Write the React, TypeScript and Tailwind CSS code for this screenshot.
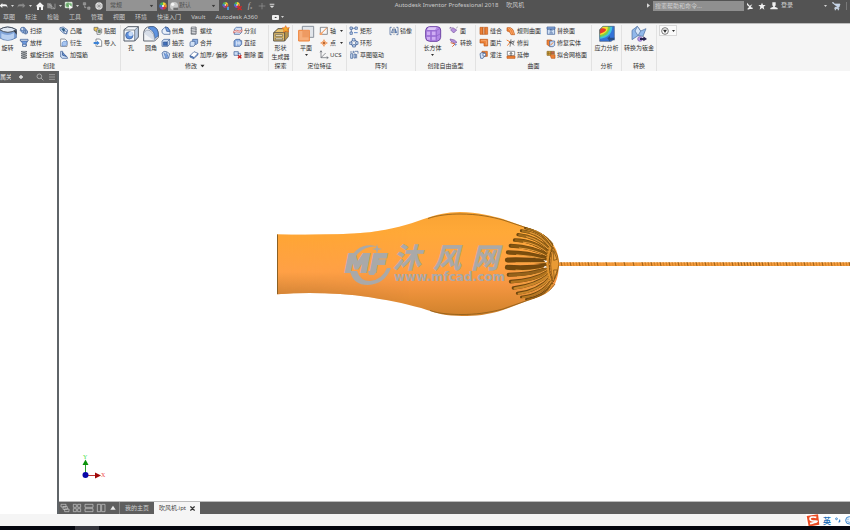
import type { ReactNode } from "react";

const BLUE = "#5b86c8";
const NAVY = "#34568f";
const PALE = "#cfe0f6";
const ORANGE = "#ee8136";
const PEACH = "#f8b98a";
const GRAY = "#5a5f66";

/* Every ribbon glyph is drawn on a 30-unit grid. */
const glyphs: Record<string, ReactNode> = {
  sweep: (
    <g stroke={NAVY} strokeWidth="2">
      <path d="M4 14C4 6 12 2 17 5L22 12 12 22Z" fill="#8fb1e4" />
      <circle cx="10" cy="9" r="5" fill={PALE} />
      <circle cx="20" cy="18" r="6" fill={PALE} />
      <path d="M14 18h12M20 12v12" />
    </g>
  ),
  loft: (
    <g stroke={NAVY} strokeWidth="2">
      <path d="M4 6h23l-5 10v8H11v-8Z" fill="#6f9be0" />
      <path d="M4 4h23v5H4ZM11 19h10v6H11Z" fill="#f5faff" />
    </g>
  ),
  coil: (
    <g stroke="#3d4248" strokeWidth="3" fill="none">
      <path d="M6 5q9 4 18 0M6 11q9 4 18 0M6 17q9 4 18 0M6 23q9 4 18 0" />
      <path d="M8 4h14M8 10h14M8 16h14M8 22h14" stroke="#777d84" strokeWidth="2" />
    </g>
  ),
  emboss: (
    <g strokeWidth="2">
      <path d="M3 5l10-2 13 9-3 12-10-3L3 12Z" fill={PALE} stroke={NAVY} />
      <path d="M6 8l8-2 5 6-5 5Z" fill="#2b5d86" />
      <path d="M15 14l8 3-2 7-6-4Z" fill="#fff" stroke={NAVY} />
    </g>
  ),
  derive: (
    <g stroke={GRAY} strokeWidth="2">
      <path d="M5 3h13l6 6v16H5Z" fill="#fff" />
      <path d="M9 14l5-4h10v9l-5 5H9Z" fill="#a9c7f0" stroke={BLUE} />
    </g>
  ),
  rib: (
    <g stroke={NAVY} strokeWidth="2">
      <path d="M5 4h6v11l12 4 3 6H10l-5-4Z" fill={PALE} />
      <path d="M11 7l11 12-11-3Z" fill="#6f9be0" />
    </g>
  ),
  decal: (
    <g stroke={GRAY} strokeWidth="2">
      <path d="M3 4h12v9l-4 4-8-4Z" fill="#f5c94e" />
      <path d="M12 9h14v12l-5 4h-9Z" fill="#fff" />
      <path d="M16 12h6v8h-6Z" fill="#7ab05a" />
    </g>
  ),
  import: (
    <g stroke={GRAY} strokeWidth="2">
      <path d="M9 3h11l6 6v16H9Z" fill="#fff" />
      <path d="M2 12h10V8l8 7-8 7v-4H2Z" fill="#3b82d6" stroke="none" />
    </g>
  ),
  chamfer: (
    <g stroke={NAVY} strokeWidth="2">
      <path d="M3 12L13 3l8 2 6 9v11H9l-6-5Z" fill="#e8f0fb" />
      <path d="M13 3l8 2 6 12-10-1Z" fill="#6f9be0" />
    </g>
  ),
  shell: (
    <g stroke={NAVY} strokeWidth="2">
      <path d="M3 9l6-5h17v15l-6 6H3Z" fill={PALE} />
      <path d="M7 12h11v10H7Z" fill="#3f6fbc" />
      <path d="M20 10v15M20 10l6-6" fill="none" />
    </g>
  ),
  draft: (
    <g stroke={NAVY} strokeWidth="2">
      <path d="M3 9l6-5 8 1 9 6-3 14H7Z" fill={PALE} />
      <path d="M9 8l6 17M16 7l6 17" />
      <path d="M10 10l7 2 3 12h-6Z" fill="#6f9be0" stroke="none" />
    </g>
  ),
  thread: (
    <g stroke={GRAY} strokeWidth="2" fill="none">
      <path d="M7 3h14v22H7Z" fill="#eef0f3" />
      <path d="M5 8l18-2M5 13l18-2M5 18l18-2M5 23l18-2" />
    </g>
  ),
  combine: (
    <g stroke={NAVY} strokeWidth="2">
      <path d="M11 4h15v12l-4 3H11Z" fill="#8fb1e4" />
      <path d="M3 13l4-3h11v11l-4 4H3Z" fill={PALE} />
    </g>
  ),
  thicken: (
    <g stroke={NAVY} strokeWidth="2">
      <path d="M3 17L15 5l12 5-12 13Z" fill="#fff" />
      <path d="M3 17v4l11 5v-4ZM14 26l13-12v-4" fill="#6f9be0" />
    </g>
  ),
  split: (
    <g strokeWidth="2">
      <path d="M4 9l6-5h16v15l-6 6H4Z" fill={PALE} stroke={NAVY} />
      <path d="M2 16q8-6 13-2t12-3v5q-7 5-12 2t-13 3Z" fill="#fff" stroke="#d6534a" />
    </g>
  ),
  direct: (
    <g stroke={NAVY} strokeWidth="2">
      <path d="M3 9l6-5h12v4h5v11l-6 6H3Z" fill="#8fb1e4" />
      <path d="M11 9v14M18 8v14M11 15h13" stroke="#fff" />
    </g>
  ),
  deleteFace: (
    <g strokeWidth="2">
      <path d="M3 5h13v11H3Z" fill={PALE} stroke={NAVY} />
      <path d="M14 10h8v6" fill="none" stroke={NAVY} />
      <path d="M15 16l10 9M25 16l-10 9" stroke="#c7221f" strokeWidth="4" />
    </g>
  ),
  axis: (
    <g strokeWidth="2">
      <path d="M4 4h21v21H4Z" fill="#f7f7f7" stroke={GRAY} />
      <path d="M5 24L24 5" stroke={ORANGE} strokeWidth="3" />
      <path d="M2 20h8v7H2Z" fill="#f5a36b" />
    </g>
  ),
  point: (
    <g stroke={ORANGE} strokeWidth="2">
      <path d="M15 4v22M4 15h22" />
      <path d="M15 7l8 8-8 8-8-8Z" fill={PEACH} />
      <circle cx="15" cy="15" r="2" fill="#a24a12" stroke="#a24a12" />
    </g>
  ),
  ucs: (
    <g stroke={GRAY} strokeWidth="2" fill="none">
      <path d="M6 3v20h21M6 23L20 9" />
      <path d="M3 7l3-5 3 5M23 20l5 3-5 3" />
    </g>
  ),
  rectPattern: (
    <g stroke={NAVY} strokeWidth="2" fill={PALE}>
      <path d="M7 7h16M7 7v15" fill="none" />
      <path d="M3 3h7v7H3ZM18 3h7v7h-7ZM3 18h7v7H3Z" />
      <path d="M15 20h11" stroke={BLUE} strokeWidth="3" />
    </g>
  ),
  circPattern: (
    <g stroke={NAVY} strokeWidth="2" fill={PALE}>
      <circle cx="15" cy="15" r="9" fill="none" />
      <path d="M10 2h8v7h-8ZM2 12h7v7H2ZM20 11h7v8h-7ZM11 20h8v7h-8Z" />
    </g>
  ),
  sketchPattern: (
    <g stroke={NAVY} strokeWidth="2" fill={PALE}>
      <path d="M5 11h6v14H5ZM15 12h5v12h-5Z" />
      <path d="M3 6h7M18 4h9v7M23 12v13" fill="none" />
      <circle cx="14" cy="6" r="2" />
    </g>
  ),
  mirror: (
    <g stroke={NAVY} strokeWidth="2">
      <path d="M8 4H3v22h5M22 4h5v22h-5" fill="none" />
      <path d="M7 20L12 8v12Z" fill="#fff" />
      <path d="M23 20L18 8v12Z" fill="#8fb1e4" />
      <path d="M15 3v24" stroke={GRAY} strokeDasharray="3 2" />
    </g>
  ),
  face: (
    <g strokeWidth="2">
      <path d="M11 5l12 7-9 9-9-9Z" fill="#b792dd" stroke="#75539b" />
      <path d="M3 4l5 1M4 3l-1 6" stroke="#75539b" />
      <path d="M22 6l4-3" stroke={GRAY} />
    </g>
  ),
  convert: (
    <g strokeWidth="2">
      <path d="M3 3l13 3 8 7-6 3L6 10Z" fill="#b792dd" stroke="#75539b" />
      <path d="M5 14l13 4-8 8" fill="none" stroke="#d5673c" strokeWidth="3" />
      <path d="M17 17l8 2-7 5Z" fill="#6f9be0" />
    </g>
  ),
  stitch: (
    <g stroke="#bd5a1b" strokeWidth="2">
      <path d="M3 4h9v21H3ZM17 4h9v21h-9Z" fill={ORANGE} />
      <path d="M12 4h5v21h-5Z" fill="#fff" />
      <path d="M10 9h9M10 15h9M10 21h9" />
    </g>
  ),
  patch: (
    <g stroke="#bd5a1b" strokeWidth="2">
      <path d="M3 4h23v20H15v-9H3Z" fill={ORANGE} />
      <path d="M6 8h16v12" fill="none" stroke={PEACH} />
    </g>
  ),
  sculpt: (
    <g strokeWidth="2">
      <path d="M9 4h16v15H9Z" fill={ORANGE} stroke="#bd5a1b" />
      <path d="M3 11l5-3h9v10l-5 7H5Z" fill={PALE} stroke={NAVY} />
      <path d="M12 10h8v8h-8Z" fill="#fff" stroke={NAVY} />
    </g>
  ),
  ruled: (
    <g stroke="#bd5a1b" strokeWidth="2">
      <path d="M3 5q12-3 18 6l5 15H15Q14 16 3 15Z" fill={ORANGE} />
      <path d="M6 5q9 8 11 20M12 5q9 8 11 20" fill="none" stroke={PEACH} />
    </g>
  ),
  trim: (
    <g strokeWidth="2">
      <path d="M2 6l11 6-9 11" fill="none" stroke={ORANGE} strokeWidth="3" />
      <path d="M15 4l-3 22M9 14l17-5M12 12l13 10" stroke="#3d4248" />
      <circle cx="20" cy="14" r="3" fill="#fff" stroke="#3d4248" />
    </g>
  ),
  extend: (
    <g strokeWidth="2">
      <path d="M4 4h22v12H4Z" fill="#fff" stroke={GRAY} />
      <path d="M3 18h24v7H3Z" fill={ORANGE} stroke="#bd5a1b" />
      <path d="M15 18V8M11 12l4-5 4 5" fill="none" stroke="#333" />
    </g>
  ),
  replace: (
    <g stroke={NAVY} strokeWidth="2">
      <path d="M4 9h22v16H4Z" fill={PALE} />
      <path d="M3 3h24v6H3Z" fill="#8fb1e4" />
      <path d="M10 21h11M15 20v-9M11 14l4-4 4 4" fill="none" />
    </g>
  ),
  repair: (
    <g strokeWidth="2">
      <path d="M3 6h13l4 5v13H8l-5-5Z" fill={ORANGE} stroke="#bd5a1b" />
      <path d="M11 9h15v13l-5 4H11Z" fill={PALE} stroke={NAVY} />
      <path d="M13 22l9-9" stroke={ORANGE} strokeWidth="3" />
    </g>
  ),
  fitMesh: (
    <g strokeWidth="2">
      <path d="M3 4h12v12H3Z" fill="#d7a33b" stroke="#8b6a24" />
      <path d="M12 14h15v11H16Z" fill={ORANGE} stroke="#bd5a1b" />
      <path d="M15 4h10v8H15Z" fill="#c35f4d" stroke="#8b6a24" />
      <path d="M7 4v12M3 10h12" stroke="#8b6a24" />
    </g>
  ),
};

function Glyph({ name }: { name: string }) {
  return (
    <svg viewBox="0 0 30 30" className="size-2.5 shrink-0" fill="none" aria-hidden="true">
      {glyphs[name]}
    </svg>
  );
}

function Caret({ className = "" }: { className?: string }) {
  return (
    <svg viewBox="0 0 6 4" className={`h-0.5 w-[3px] shrink-0 ${className}`} aria-hidden="true">
      <path d="M0 0h6L3 4Z" fill="currentColor" />
    </svg>
  );
}

type Tool = { icon: string; label: string; menu?: boolean };

function ToolColumn({ tools, width }: { tools: Tool[]; width: string }) {
  return (
    <div className={`flex shrink-0 flex-col ${width}`}>
      {tools.map((t) => (
        <button key={t.label} className="flex h-3 items-center gap-px whitespace-nowrap text-left">
          <Glyph name={t.icon} />
          <span>{t.label}</span>
          {t.menu && <Caret className="ml-[3px]" />}
        </button>
      ))}
    </div>
  );
}

function BigTool({ label, width, menu, children }: { label: ReactNode; width: string; menu?: boolean; children: ReactNode }) {
  return (
    <button className={`flex h-9 shrink-0 flex-col items-center whitespace-nowrap text-center ${width}`}>
      <svg viewBox="0 0 54 54" className="size-[18px] shrink-0" fill="none" aria-hidden="true">
        {children}
      </svg>
      <span className="mt-px block leading-[9px]">{label}</span>
      {menu && <Caret className="mt-px" />}
    </button>
  );
}

function Panel({ title, width, labelClass = "", menu, children }: { title: string; width: string; labelClass?: string; menu?: boolean; children: ReactNode }) {
  return (
    <section aria-label={title} className={`flex shrink-0 flex-col border-r border-[#e2e2e2] ${width}`}>
      <div className="flex h-9">{children}</div>
      <h2 className={`flex h-2.5 items-center justify-center gap-1 whitespace-nowrap ${labelClass}`}>
        {title}
        {menu && <Caret className="scale-150" />}
      </h2>
    </section>
  );
}

function BarButton({ label, width, children }: { label: string; width: string; children: ReactNode }) {
  return (
    <button aria-label={label} className={`flex h-full shrink-0 items-center justify-center ${width}`}>
      {children}
    </button>
  );
}

function BarIcon({ children }: { children: ReactNode }) {
  return (
    <svg viewBox="0 0 30 30" className="size-2.5 shrink-0" fill="none" aria-hidden="true">
      {children}
    </svg>
  );
}

function ColorWheel() {
  return (
    <>
      <path d="M15 15V4A11 11 0 0 1 25 10Z" fill="#f1d232" />
      <path d="M15 15L25 10A11 11 0 0 1 25 20Z" fill="#ef8a2b" />
      <path d="M15 15L25 20A11 11 0 0 1 15 26Z" fill="#d5363c" />
      <path d="M15 15V26A11 11 0 0 1 5 20Z" fill="#8d49b8" />
      <path d="M15 15L5 20A11 11 0 0 1 5 10Z" fill="#3c7be0" />
      <path d="M15 15L5 10A11 11 0 0 1 15 4Z" fill="#4cb858" />
      <circle cx="15" cy="15" r="3" fill="#fff" />
    </>
  );
}

function TitleBar() {
  return (
    <header className="flex h-[11px] items-center text-[#d2d2d2]">
      <BarButton label="撤销" width="w-2">
        <BarIcon><path d="M10 6L2 14l8 7v-5h11q4 0 4 6v-6q0-6-7-6h-8Z" fill="#f2f2f2" /></BarIcon>
      </BarButton>
      <BarButton label="撤销列表" width="w-2"><Caret /></BarButton>
      <BarButton label="重做" width="w-2.5">
        <BarIcon><path d="M20 6l8 8-8 7v-5H9q-4 0-4 6v-6q0-6 7-6h8Z" fill="#8b8b8b" /></BarIcon>
      </BarButton>
      <BarButton label="重做列表" width="w-2"><Caret /></BarButton>
      <BarButton label="主页" width="w-[11px]">
        <BarIcon><path d="M2 16L15 4l13 12h-4v11h-6v-8h-6v8H6V16Z" fill="#f5f5f5" /></BarIcon>
      </BarButton>
      <BarButton label="草图" width="w-3">
        <BarIcon>
          <path d="M3 7h11l4 4v11H4Z" fill="#8b8b8b" />
          <path d="M8 9l18 14M27 8v15H14" stroke="#b0b0b0" strokeWidth="2" />
        </BarIcon>
      </BarButton>
      <BarButton label="草图列表" width="w-[7px]"><Caret /></BarButton>
      <BarButton label="选择" width="w-2.5">
        <BarIcon>
          <path d="M4 4h20v16H4Z" fill="#8fc58c" stroke="#e8f2e8" strokeWidth="3" />
          <path d="M4 12h20M12 4v16" stroke="#3f8a46" strokeWidth="2" />
          <path d="M14 9l12 12-6 1-3 6Z" fill="#fff" />
        </BarIcon>
      </BarButton>
      <BarButton label="选择列表" width="w-[7px]"><Caret /></BarButton>
      <BarButton label="参数" width="w-3">
        <BarIcon><path d="M4 5h7v7H4ZM17 18h7v7h-7ZM8 14v6h5" fill="#8f8f8f" stroke="#a3a3a3" strokeWidth="2" /></BarIcon>
      </BarButton>
      <BarButton label="材料浏览器" width="w-3">
        <BarIcon>
          <circle cx="15" cy="15" r="11" fill="#e7e7e7" />
          <path d="M15 4v22M4 15h22M7 8l16 14M23 8L7 22" stroke="#8d8d8d" strokeWidth="2" />
        </BarIcon>
      </BarButton>
      <div className="relative ml-px flex h-[11px] w-[51px] shrink-0 items-center bg-[#939393] text-[#505050]">
        <select aria-label="材料" className="h-full w-full appearance-none pl-1 leading-[11px] outline-none">
          <option>常规</option>
        </select>
        <Caret className="pointer-events-none absolute right-1 scale-125 text-[#3c3c3c]" />
      </div>
      <BarButton label="外观" width="w-[11px]"><BarIcon><ColorWheel /></BarIcon></BarButton>
      <div className="relative flex h-[11px] w-[51px] shrink-0 items-center bg-[#939393] text-[#505050]">
        <svg viewBox="0 0 30 30" className="pointer-events-none absolute left-px size-2.5" aria-hidden="true">
          <circle cx="15" cy="15" r="12" fill="#c9c9c9" />
          <circle cx="11" cy="10" r="5" fill="#f5f5f5" />
          <path d="M13 20h14v7H13Z" fill="#6e6e6e" />
        </svg>
        <select aria-label="外观样式" className="h-full w-full appearance-none pl-[11px] leading-[11px] outline-none">
          <option>默认</option>
        </select>
        <Caret className="pointer-events-none absolute right-1 scale-125 text-[#3c3c3c]" />
      </div>
      <BarButton label="调整外观" width="w-[13px]">
        <BarIcon><g transform="translate(1 0) scale(.8)"><ColorWheel /></g><path d="M18 17h6v10h-6Z" fill="#4b9ad8" /></BarIcon>
      </BarButton>
      <BarButton label="清除外观" width="w-3">
        <BarIcon><g transform="scale(.8)"><ColorWheel /></g><path d="M14 16l12 11M26 16L14 27" stroke="#d12a2a" strokeWidth="4" /></BarIcon>
      </BarButton>
      <BarButton label="函数" width="w-3">
        <span className="font-['Liberation_Serif',serif] text-[8px] leading-none italic text-[#bdbdbd]">f<sub className="text-[5px]">x</sub></span>
      </BarButton>
      <BarButton label="添加" width="w-3"><BarIcon><path d="M15 6v19M5 15h20" stroke="#999" strokeWidth="2" /></BarIcon></BarButton>
      <BarButton label="自定义" width="w-2">
        <BarIcon><path d="M8 8h14v3H8ZM8 14h14l-7 7Z" fill="#dcdcdc" /></BarIcon>
      </BarButton>

      <h1 className="flex min-w-0 flex-1 justify-center gap-2 whitespace-nowrap pr-1 text-[#c9c9c9]">
        <span>Autodesk Inventor Professional 2018</span>
        <span>吹风机</span>
      </h1>

      <svg viewBox="0 0 4 6" className="mr-[3px] h-[5px] w-[3px] shrink-0" aria-hidden="true">
        <path d="M0 0l4 3-4 3Z" fill="#d8d8d8" />
      </svg>
      <input
        aria-label="搜索帮助和命令"
        placeholder="搜索帮助和命令..."
        className="h-2.5 w-[91px] shrink-0 bg-[#8f8f8f] pl-0.5 outline-none placeholder:text-[#d0d0d0]"
      />
      <BarButton label="通信中心" width="w-3">
        <BarIcon><path d="M6 5l8 9 8-4-5 8 6 2v4h-8l-7 2v-4l5-4-7-6Z" fill="#f0f0f0" /></BarIcon>
      </BarButton>
      <BarButton label="收藏夹" width="w-3">
        <BarIcon><path d="M15 5l3 7h8l-6 5 2 9-7-5-7 5 2-9-6-5h8Z" fill="#f0f0f0" /></BarIcon>
      </BarButton>
      <button className="flex shrink-0 items-center gap-0.5 pl-px">
        <BarIcon><path d="M10 4h10v9l-3 4 9 4v4H4v-4l9-4-3-4Z" fill="#f0f0f0" /></BarIcon>
        登录
      </button>
      <BarButton label="登录选项" width="w-[9px] ml-7"><Caret /></BarButton>
      <BarButton label="应用商店" width="w-3">
        <BarIcon><path d="M3 5h5l2 4h17l-3 10H12l-1 4h14" fill="#c3d3e8" stroke="#d7e2f0" strokeWidth="2" /><circle cx="13" cy="26" r="2" fill="#d7e2f0" /><circle cx="22" cy="26" r="2" fill="#d7e2f0" /></BarIcon>
      </BarButton>
      <span className="ml-1 mr-[3px] h-2 w-px shrink-0 bg-[#797979]" />
    </header>
  );
}

const tabs = ["草图", "标注", "检验", "工具", "管理", "视图", "环境", "快速入门", "Vault", "Autodesk A360"];

function TabBar() {
  return (
    <nav className="flex h-3 items-center gap-2.5 pl-[3px] text-[#cecece]">
      {tabs.map((t) => (
        <button key={t} className="whitespace-nowrap">{t}</button>
      ))}
      <button aria-label="显示选项" className="ml-1 flex items-center gap-0.5">
        <svg viewBox="0 0 21 15" className="h-[5px] w-[7px]" aria-hidden="true">
          <rect width="21" height="15" rx="3" fill="#eee" />
          <path d="M7 9h8l-4-4Z" fill="#333" />
        </svg>
        <Caret />
      </button>
    </nav>
  );
}

function Ribbon() {
  return (
    <div className="flex h-12 overflow-hidden border-t border-[#bdbdbd] bg-[#f5f5f5] pt-px text-[#303030]">
      <Panel title="创建" width="w-[121px]" labelClass="pr-[22px]">
        <BigTool label="旋转" width="w-[15px]">
          <g transform="translate(5 0)">
            <path d="M-4 14Q20-2 47 14v24Q20 54-4 38Z" fill="#7fa3d8" stroke="#3e5f94" strokeWidth="2" />
            <path d="M-4 14Q22 30 47 14Q20-2-4 14Z" fill="#dfe8f4" stroke="#49515c" strokeWidth="3" />
            <path d="M2 25q20 10 38-1v16q-18 10-38 0Z" fill="#b9d0f0" />
            <path d="M39 18l9-2v13Z" fill="#353b44" />
          </g>
        </BigTool>
        <ToolColumn width="ml-1 w-10" tools={[{ icon: "sweep", label: "扫掠" }, { icon: "loft", label: "放样" }, { icon: "coil", label: "螺旋扫掠" }]} />
        <ToolColumn width="w-[34px]" tools={[{ icon: "emboss", label: "凸雕" }, { icon: "derive", label: "衍生" }, { icon: "rib", label: "加强筋" }]} />
        <ToolColumn width="w-[27px]" tools={[{ icon: "decal", label: "贴图" }, { icon: "import", label: "导入" }]} />
      </Panel>

      <Panel title="修改" width="w-[148px]" menu>
        <BigTool label="孔" width="w-5">
          <path d="M6 14L18 5h31v31L38 48H6Z" fill="#f2f6fb" stroke="#555d68" strokeWidth="3" />
          <path d="M38 15v33l11-12V5Z" fill="#b7c9e2" stroke="#555d68" strokeWidth="2" />
          <path d="M6 15h32" stroke="#555d68" strokeWidth="2" />
          <circle cx="22" cy="31" r="11" fill="#5e8fdb" stroke={NAVY} strokeWidth="2" />
          <circle cx="26" cy="27" r="7" fill="#c7dcf8" />
        </BigTool>
        <BigTool label="圆角" width="w-5">
          <path d="M5 48V22Q9 5 24 5h10q15 4 15 24v8L38 48Z" fill="#f1f3f6" stroke="#626873" strokeWidth="3" />
          <path d="M24 5h11q14 5 14 27L38 41Q40 18 18 9Z" fill="#5f93df" stroke={NAVY} strokeWidth="2" />
          <path d="M5 25Q12 11 24 17 38 25 38 48" fill="#d6dde8" stroke="#8790a0" strokeWidth="2" />
        </BigTool>
        <ToolColumn width="w-7" tools={[{ icon: "chamfer", label: "倒角" }, { icon: "shell", label: "抽壳" }, { icon: "draft", label: "拔模" }]} />
        <ToolColumn width="w-11" tools={[{ icon: "thread", label: "螺纹" }, { icon: "combine", label: "合并" }, { icon: "thicken", label: "加厚/ 偏移" }]} />
        <ToolColumn width="w-9" tools={[{ icon: "split", label: "分割" }, { icon: "direct", label: "直接" }, { icon: "deleteFace", label: "删除 面" }]} />
      </Panel>

      <Panel title="探索" width="w-6">
        <BigTool width="w-[23px]" label={<>形状<br />生成器</>}>
          <path d="M5 23L18 11h31L38 23v25H5Z" fill="#e9c36c" stroke="#5b5548" strokeWidth="3" />
          <path d="M5 23h33l11-12v24L38 48V23Z" fill="#b6934c" stroke="#5b5548" strokeWidth="2" />
          <path d="M10 29h22v5H10ZM10 39h22v5H10Z" fill="#fff5d6" stroke="#5b5548" strokeWidth="2" />
          <path d="M41 2l3 7 8-1-5 6 3 7-8-3-7 4 1-8-6-5 8-1Z" fill="#f6ae2d" stroke="#e26a1b" strokeWidth="2" />
        </BigTool>
      </Panel>

      <Panel title="定位特征" width="w-[54px]">
        <BigTool label="平面" width="w-[26px]" menu>
          <path d="M16 4h34v33H16Z" fill="#e2e6eb" stroke="#8a929d" strokeWidth="3" />
          <path d="M5 16h32v32H5Z" fill="#f6ae7b" stroke={ORANGE} strokeWidth="3" />
          <path d="M16 16h21v21H16Z" fill="#ee9a62" />
        </BigTool>
        <ToolColumn width="w-[27px]" tools={[{ icon: "axis", label: "轴", menu: true }, { icon: "point", label: "点", menu: true }, { icon: "ucs", label: "UCS" }]} />
      </Panel>

      <Panel title="阵列" width="w-[69px]">
        <ToolColumn width="ml-0.5 w-10" tools={[{ icon: "rectPattern", label: "矩形" }, { icon: "circPattern", label: "环形" }, { icon: "sketchPattern", label: "草图驱动" }]} />
        <ToolColumn width="w-6" tools={[{ icon: "mirror", label: "镜像" }]} />
      </Panel>

      <Panel title="创建自由造型" width="w-[60px]">
        <BigTool label="长方体" width="w-[33px]" menu>
          <path d="M5 16Q6 6 16 5h24q10 1 10 10v22q-1 10-11 12H17Q5 48 5 38Z" fill="#b287e6" stroke="#6f45a5" strokeWidth="3" />
          <path d="M14 7h24l-5 8H9Z" fill="#dcc6f7" />
          <path d="M7 17h30l11-7M7 33h30l11-6M21 17v30M37 17v30" stroke="#8a5cc4" strokeWidth="2" />
          <path d="M9 20h9v10H9ZM24 20h10v10H24ZM9 36h9v8H9ZM24 36h10v8H24Z" fill="#cfadf3" />
        </BigTool>
        <ToolColumn width="w-6" tools={[{ icon: "face", label: "面" }, { icon: "convert", label: "转换" }]} />
      </Panel>

      <Panel title="曲面" width="w-[116px]">
        <ToolColumn width="ml-[3px] w-[27px]" tools={[{ icon: "stitch", label: "缝合" }, { icon: "patch", label: "面片" }, { icon: "sculpt", label: "灌注" }]} />
        <ToolColumn width="w-10" tools={[{ icon: "ruled", label: "规则曲面" }, { icon: "trim", label: "修剪" }, { icon: "extend", label: "延伸" }]} />
        <ToolColumn width="w-[43px]" tools={[{ icon: "replace", label: "替换面" }, { icon: "repair", label: "修复实体" }, { icon: "fitMesh", label: "拟合网格面" }]} />
      </Panel>

      <Panel title="分析" width="w-[30px]">
        <BigTool label="应力分析" width="w-[29px]">
          <path d="M5 14L15 4h34v35l-9 10H5Z" fill="#3372d8" />
          <path d="M5 14L15 4h28Q43 36 5 42Z" fill="#42c4dc" />
          <path d="M5 14L15 4h22Q36 31 5 37Z" fill="#7ad14a" />
          <path d="M5 14L15 4h15Q30 26 5 31Z" fill="#f6e12d" />
          <path d="M5 14l4-4q15-2 15 4T5 26Z" fill="#e93b27" />
          <path d="M5 14L15 4h34v35l-9 10H5Z" stroke="#4b5e80" strokeWidth="2" />
          <path d="M28 40l8-7v5h14v8H36v4Z" fill="#294e86" />
        </BigTool>
      </Panel>

      <Panel title="转换" width="w-[35px]">
        <BigTool label="转换为钣金" width="w-[34px]">
          <path d="M6 16L22 4l10 14 16-7-9 23-15-2L6 44Z" fill="#91b8ea" stroke="#496b9c" strokeWidth="2" />
          <path d="M22 4l10 14-8 14L15 18Z" fill="#d7e6f9" stroke="#496b9c" strokeWidth="2" />
          <circle cx="30" cy="42" r="7" fill="#b99be6" stroke="#7757ab" strokeWidth="2" />
          <path d="M30 39h10v-5l11 8-11 7v-4H30Z" fill="#282450" />
        </BigTool>
      </Panel>

      <button aria-label="面板选项" className="ml-0.5 flex h-[11px] w-[18px] items-center justify-center gap-[3px] border border-[#d8d8d8] bg-[#fafafa]">
        <svg viewBox="0 0 24 24" className="size-2" aria-hidden="true">
          <circle cx="12" cy="12" r="10" fill="#fff" stroke="#777" strokeWidth="3" />
          <path d="M6 8h12l-6 10Z" fill="#333" />
        </svg>
        <Caret />
      </button>
    </div>
  );
}

function Browser() {
  return (
    <aside className="flex w-[59px] shrink-0 flex-col border-r-2 border-[#5f6468] bg-white">
      <div className="flex h-3 items-center bg-[#5e5e5e] text-[#e8e8e8]">
        <span className="w-[11px] shrink-0 overflow-hidden whitespace-nowrap">属关</span>
        <BarButton label="添加选项卡" width="ml-1 w-3">
          <BarIcon><path d="M15 9v12M9 15h12" stroke="#e8e8e8" strokeWidth="4" /></BarIcon>
        </BarButton>
        <BarButton label="搜索" width="ml-2 w-2.5">
          <BarIcon><circle cx="13" cy="13" r="7" stroke="#ccc" strokeWidth="2" /><path d="M18 18l7 7" stroke="#ccc" strokeWidth="2" /></BarIcon>
        </BarButton>
        <BarButton label="菜单" width="ml-0.5 w-2.5">
          <BarIcon><path d="M6 8h18M6 15h18M6 22h18" stroke="#bbb" strokeWidth="2" /></BarIcon>
        </BarButton>
      </div>
      <div className="flex-1" />
    </aside>
  );
}

/* Air slots of the rear grille: tip, bow and inner end, on a 3-per-pixel grid. */
const slots = [
  { x: 106, y: 54, cx: 158, cy: 62, ex: 186, ey: 106, w: 6, c: "#a06d1c" },
  { x: 94, y: 62, cx: 150, cy: 68, ex: 184, ey: 114, w: 7, c: "#a8721f" },
  { x: 84, y: 74, cx: 142, cy: 80, ex: 182, ey: 122, w: 8, c: "#a06b1a" },
  { x: 74, y: 90, cx: 136, cy: 92, ex: 178, ey: 130, w: 9, c: "#946013" },
  { x: 62, y: 107, cx: 130, cy: 110, ex: 176, ey: 138, w: 10, c: "#875710" },
  { x: 54, y: 127, cx: 120, cy: 128, ex: 174, ey: 147, w: 11, c: "#7b4e0e" },
  { x: 52, y: 150, cx: 110, cy: 148, ex: 172, ey: 155, w: 13, c: "#73490e" },
  { x: 52, y: 172, cx: 110, cy: 176, ex: 172, ey: 168, w: 13, c: "#75490c" },
  { x: 56, y: 194, cx: 120, cy: 194, ex: 174, ey: 176, w: 10, c: "#96621a" },
  { x: 62, y: 215, cx: 130, cy: 212, ex: 176, ey: 185, w: 9, c: "#b0731d" },
  { x: 70, y: 234, cx: 138, cy: 226, ex: 178, ey: 194, w: 8, c: "#c9862a" },
  { x: 82, y: 250, cx: 146, cy: 242, ex: 182, ey: 202, w: 7, c: "#c9862a" },
  { x: 94, y: 261, cx: 154, cy: 254, ex: 184, ey: 212, w: 6, c: "#b97a22" },
  { x: 108, y: 268, cx: 160, cy: 260, ex: 187, ey: 220, w: 4, c: "#9e6618" },
];

const beads = Array.from({ length: 98 }, (_, i) => 561 + i * 3);

const BODY =
  "M277 234.500C308 235 340 235 370 232.300C392 229 408 225 423 219.300C436 215 446 212 460 212C478 212 492 216 503 219L527 227.500C541 231 549 238 553 244Q559 253 559 264Q559 275 555 284C549 294 540 297 527 301L503 310C488 315 475 316 462 316C446 316 436 313 427 310C412 305 392 301 370 297.300C340 293 308 292 277 294.300Z";

function Model() {
  return (
    <svg viewBox="59 71 791 431" preserveAspectRatio="xMinYMin slice" className="h-full w-full" role="img" aria-label="吹风机模型">
      <defs>
        <linearGradient id="shade" x1="0" y1="0" x2="0" y2="1">
          <stop offset="0" stopColor="#f9a333" />
          <stop offset=".2" stopColor="#ffa938" />
          <stop offset=".5" stopColor="#ffa243" />
          <stop offset=".68" stopColor="#f79743" />
          <stop offset=".85" stopColor="#e28c35" />
          <stop offset="1" stopColor="#cf812d" />
        </linearGradient>
        <linearGradient id="neck" x1="0" y1="0" x2="0" y2="1">
          <stop offset="0" stopColor="#ffa632" />
          <stop offset=".6" stopColor="#ffa046" />
          <stop offset="1" stopColor="#c97e33" />
        </linearGradient>
        <linearGradient id="fade" x1="277" y1="0" x2="410" y2="0" gradientUnits="userSpaceOnUse">
          <stop offset="0" stopColor="#fff" />
          <stop offset=".3" stopColor="#ddd" />
          <stop offset="1" stopColor="#000" />
        </linearGradient>
        <mask id="neckMask">
          <rect x="277" y="200" width="163" height="130" fill="url(#fade)" />
        </mask>
        <clipPath id="bodyClip">
          <path d={BODY} />
        </clipPath>
      </defs>

      <rect x="557" y="262" width="400" height="4" fill="#f39a3b" />
      <path d="M557 262.500h400" stroke="#f9bd7c" />
      {beads.map((x, i) => (
        <path
          key={x}
          d={`M${x} 262l1 4`}
          stroke={i % 3 === 0 || (i > 58 && i < 68) ? "#8d560f" : "#c67a24"}
          strokeWidth="1"
          opacity={i > 12 && i < 28 && i % 3 !== 0 ? 0.2 : 0.85}
        />
      ))}

      <path d={BODY} fill="url(#shade)" />
      <g clipPath="url(#bodyClip)">
        <rect x="277" y="230" width="163" height="70" fill="url(#neck)" mask="url(#neckMask)" />
      </g>
      <path d="M277.500 234.500V294" stroke="#8b6023" />
      <path d="M428 218.500C438 215 450 214 460 214C478 214 492 217 503 220L527 228C541 232 549 238 553 244" fill="none" stroke="#8a5c18" strokeWidth=".8" />
      <path d="M430 310.500C440 314 452 314.500 462 314.500C475 314.500 488 313 503 309L527 300.500C540 296 549 293 555 284" fill="none" stroke="#8a5c18" strokeWidth=".8" />

      <g clipPath="url(#bodyClip)">
        <g transform="translate(490 210) scale(.3333)">
          {slots.map((s) => (
            <g key={s.y} strokeLinecap="round" fill="none">
              <path d={`M${s.x} ${s.y}Q${s.cx} ${s.cy} ${s.ex} ${s.ey}`} stroke="#6e470f" strokeWidth={s.w + 2} />
              <path d={`M${s.x + 4} ${s.y + 1}Q${s.cx} ${s.cy + 1} ${s.ex} ${s.ey}`} stroke={s.c} strokeWidth={s.w - 1} />
              <path d={`M${s.x + 26} ${s.y + s.w / 2 + 2}Q${s.cx + 6} ${s.cy + s.w / 2 + 3} ${s.ex} ${s.ey + 3}`} stroke="#eda03e" strokeWidth="3" />
            </g>
          ))}
          <path d="M180 112Q164 160 180 212" fill="none" stroke="#e2952f" strokeWidth="8" />
          <path d="M176 118Q160 162 178 210M186 112Q172 162 186 214" fill="none" stroke="#7d5011" strokeWidth="2" strokeDasharray="5 4" />
          <path d="M190 112Q205 135 207 162 204 190 190 216 182 188 182 163 183 133 190 112Z" fill="#e99a35" stroke="#6e470f" strokeWidth="2" />
          <path d="M191 122l10 26-10 3ZM191 180h11l-9 27Z" fill="#f3a743" stroke="#6e470f" strokeWidth="2" />
          <path d="M160 150l12 3-4 5ZM160 174l12-2-7-5Z" fill="#fff" />
        </g>
      </g>

      <g fill="#a9a9a9">
        <path d="M352 256A20 20 0 0 1 378 247A22 22 0 0 0 356 256ZM350 271Q353 285 368 285 385 284 391 268H387Q382 280 370 281 360 281 357 271Z" />
        <path d="M377 244l1 4 4 1-4 1-1 4-1-4-4-1 4-1ZM368 271h8l2-2-4 6h-5Z" />
        <g fontFamily="'DejaVu Sans', sans-serif" fontWeight="700" fontStyle="italic" stroke="#a9a9a9" strokeWidth="2">
          <text x="345" y="272" fontSize="25">MF</text>
        </g>
        <g fontFamily="'Liberation Sans', 'Noto Sans CJK SC', sans-serif" fontWeight="700" fontStyle="italic" fontSize="28" stroke="#a9a9a9" strokeWidth=".5">
          <text x="393" y="268">沐</text>
          <text x="433" y="268">风</text>
          <text x="471" y="268">网</text>
        </g>
        <text x="394" y="281" fontFamily="'DejaVu Sans', sans-serif" fontWeight="700" fontSize="12">www.mfcad.com</text>
      </g>

      <g strokeWidth="1">
        <path d="M85.500 475V464" stroke="#2da02d" />
        <path d="M82.500 465L85.500 459.500 88.500 465Z" fill="#0a930a" />
        <path d="M85 475.500h12" stroke="#b33" />
        <path d="M95 472.500l6 3-6 3Z" fill="#a00808" />
        <circle cx="85.500" cy="475" r="3" fill="#0808a8" />
        <g fontFamily="'Liberation Serif', serif" fontSize="6">
          <text x="83" y="459" fill="#4be04b">Y</text>
          <text x="101" y="477" fill="#f04444">X</text>
        </g>
      </g>
    </svg>
  );
}

function DocumentTabs() {
  return (
    <div className="flex h-3 shrink-0 items-stretch bg-[#5e5e5e] text-[#cfcfcf]">
      <div className="flex w-[61px] shrink-0 items-center justify-between border-r border-[#888] px-px">
        <BarButton label="层叠" width="w-2.5"><BarIcon><path d="M3 4h15v8H3ZM9 11h13v8H9ZM14 18h13v8H14Z" fill="#5e5e5e" stroke="#cfcfcf" strokeWidth="2" /></BarIcon></BarButton>
        <BarButton label="平铺" width="w-2.5"><BarIcon><path d="M4 4h9v9H4ZM17 4h9v9h-9ZM4 17h9v9H4ZM17 17h9v9h-9Z" stroke="#cfcfcf" strokeWidth="2" /></BarIcon></BarButton>
        <BarButton label="水平排列" width="w-2.5"><BarIcon><path d="M3 4h24v9H3ZM3 17h24v9H3Z" stroke="#cfcfcf" strokeWidth="2" /></BarIcon></BarButton>
        <BarButton label="垂直排列" width="w-2.5"><BarIcon><path d="M4 4h10v22H4ZM17 4h10v22H17Z" stroke="#cfcfcf" strokeWidth="2" /></BarIcon></BarButton>
        <BarButton label="展开" width="w-2.5"><BarIcon><path d="M7 20L15 8l8 12Z" fill="#e8e8e8" /></BarIcon></BarButton>
      </div>
      <button className="w-[34px] shrink-0 text-center">我的主页</button>
      <div className="flex w-[46px] shrink-0 items-center justify-center gap-1 bg-[#f5f5f5] text-[#444]">
        <button className="whitespace-nowrap">吹风机.ipt</button>
        <button aria-label="关闭">
          <svg viewBox="0 0 12 12" className="size-[5px]" aria-hidden="true"><path d="M1 1l10 10M11 1L1 11" stroke="#333" strokeWidth="3" /></svg>
        </button>
      </div>
    </div>
  );
}

export default function App() {
  return (
    <div className="flex h-screen w-full flex-col overflow-hidden bg-[#535353] font-['Noto_Sans','Noto_Sans_CJK_SC',sans-serif] text-[6px] leading-[9px]">
      <TitleBar />
      <TabBar />
      <Ribbon />
      <main className="flex min-h-0 flex-1 bg-white">
        <Browser />
        <div className="flex min-w-0 flex-1 flex-col">
          <div className="min-h-0 flex-1 overflow-hidden border-b border-[#bdbdbd]">
            <Model />
          </div>
          <DocumentTabs />
        </div>
      </main>
      <footer className="shrink-0">
        <div className="flex h-3 items-center justify-end overflow-hidden bg-[#f5f5f5]">
          <div className="flex h-3 items-center bg-white">
            <svg viewBox="0 0 42 39" className="h-[13px] w-3.5" aria-hidden="true">
              <path d="M2 6L36 1l4 31L8 38Z" fill="#ec4c23" />
              <path d="M31 10Q12 7 12 14T28 21 12 29" fill="none" stroke="#fff" strokeWidth="5" />
            </svg>
            <button className="ml-[3px] text-[8px] font-bold text-[#2470b8]">英</button>
            <button aria-label="标点" className="ml-1 w-2">
              <svg viewBox="0 0 20 20" className="size-1.5" aria-hidden="true"><circle cx="5" cy="6" r="3" fill="none" stroke="#2f7fcb" strokeWidth="3" /><path d="M15 9l1 5-4 4" fill="none" stroke="#2f7fcb" strokeWidth="4" /></svg>
            </button>
            <button aria-label="表情" className="ml-0.5 w-[5px] overflow-hidden">
              <svg viewBox="0 0 27 27" className="size-[9px]" aria-hidden="true"><circle cx="13" cy="13" r="11" fill="#e6f1fb" stroke="#3d86cc" strokeWidth="3" /><path d="M9 8v4M17 8v4M7 16q6 7 12 0" fill="none" stroke="#3d86cc" strokeWidth="2" /></svg>
            </button>
          </div>
        </div>
        <div className="h-1 bg-[#05070f] pl-[75px]">
          <div className="h-full w-6 bg-[#34353d]" />
        </div>
      </footer>
    </div>
  );
}
